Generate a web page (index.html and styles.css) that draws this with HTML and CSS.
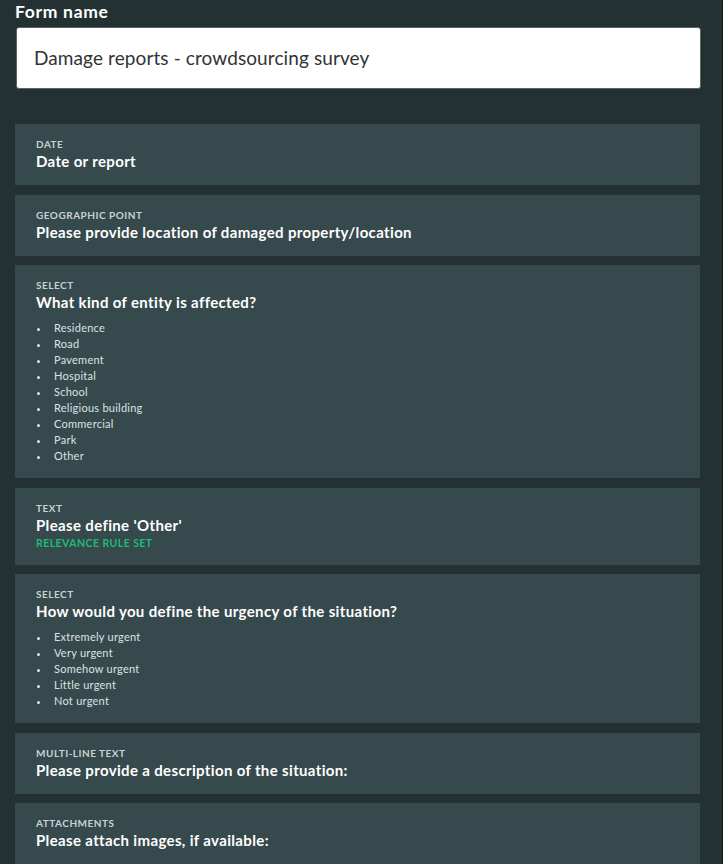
FILE: index.html
```html
<!DOCTYPE html>
<html lang="en">
<head>
<meta charset="utf-8">
<title>Form</title>
<link rel="stylesheet" href="styles.css">
</head>
<body>
<div class="page">
  <h1 class="form-title">Form name</h1>
  <div class="name-input">Damage reports - crowdsourcing survey</div>
  <div class="questions">
    <section class="card">
      <div class="type">Date</div>
      <div class="label">Date or report</div>
    </section>
    <section class="card">
      <div class="type">Geographic point</div>
      <div class="label">Please provide location of damaged property/location</div>
    </section>
    <section class="card card-list">
      <div class="type">Select</div>
      <div class="label">What kind of entity is affected?</div>
      <ul class="options">
        <li>Residence</li>
        <li>Road</li>
        <li>Pavement</li>
        <li>Hospital</li>
        <li>School</li>
        <li>Religious building</li>
        <li>Commercial</li>
        <li>Park</li>
        <li>Other</li>
      </ul>
    </section>
    <section class="card">
      <div class="type">Text</div>
      <div class="label">Please define 'Other'</div>
      <div class="rule">Relevance rule set</div>
    </section>
    <section class="card card-list">
      <div class="type">Select</div>
      <div class="label">How would you define the urgency of the situation?</div>
      <ul class="options">
        <li>Extremely urgent</li>
        <li>Very urgent</li>
        <li>Somehow urgent</li>
        <li>Little urgent</li>
        <li>Not urgent</li>
      </ul>
    </section>
    <section class="card">
      <div class="type">Multi-line text</div>
      <div class="label">Please provide a description of the situation:</div>
    </section>
    <section class="card">
      <div class="type">Attachments</div>
      <div class="label">Please attach images, if available:</div>
    </section>
  </div>
</div>
</body>
</html>
```

FILE: styles.css
```css
html, body {
  margin: 0;
  padding: 0;
  background: #243133;
  height: 100%;
  overflow: hidden;
}

body {
  font-family: Lato, "Open Sans", sans-serif;
  color: #ffffff;
}

.page {
  box-sizing: border-box;
  width: 723px;
  min-height: 864px;
  padding: 0 22px 0 15px;
  border-right: 1px solid #0e1516;
}

.form-title {
  margin: 0;
  padding-top: 1px;
  font-size: 17.5px;
  line-height: 22px;
  font-weight: 700;
  letter-spacing: 0.7px;
  color: #ffffff;
  height: 26px;
}

.name-input {
  box-sizing: border-box;
  margin-left: 1px;
  width: 685px;
  height: 62px;
  background: #ffffff;
  border: 1px solid #5b6466;
  border-radius: 3px;
  padding: 0 17px 1px;
  display: flex;
  align-items: center;
  font-size: 19px;
  letter-spacing: 0.1px;
  color: #2f3434;
}

.questions {
  margin-top: 35px;
  display: flex;
  flex-direction: column;
  gap: 9.5px;
}

.card {
  background: #36494c;
  padding: 14px 21px 15px;
}

.card-list {
  padding-bottom: 14.5px;
}

.type {
  font-size: 10px;
  line-height: 12px;
  font-weight: 700;
  letter-spacing: 0.5px;
  text-transform: uppercase;
  color: #c9d2d2;
}

.label {
  margin-top: 2px;
  font-size: 15px;
  line-height: 18px;
  font-weight: 700;
  letter-spacing: 0.35px;
  color: #ffffff;
}

.rule {
  margin-top: 2px;
  font-size: 10.5px;
  line-height: 14px;
  font-weight: 700;
  letter-spacing: 0.45px;
  text-transform: uppercase;
  color: #1fb978;
}

.options {
  list-style: none;
  margin: 8.5px 0 0;
  padding: 0;
}

.options li {
  display: flex;
  align-items: flex-start;
  font-size: 11px;
  line-height: 16px;
  letter-spacing: 0.25px;
  color: #dde3e3;
}

.options li::before {
  content: "";
  flex: none;
  width: 3px;
  height: 3px;
  border-radius: 50%;
  background: currentColor;
  margin: 8px 14px 0 1px;
}
```
